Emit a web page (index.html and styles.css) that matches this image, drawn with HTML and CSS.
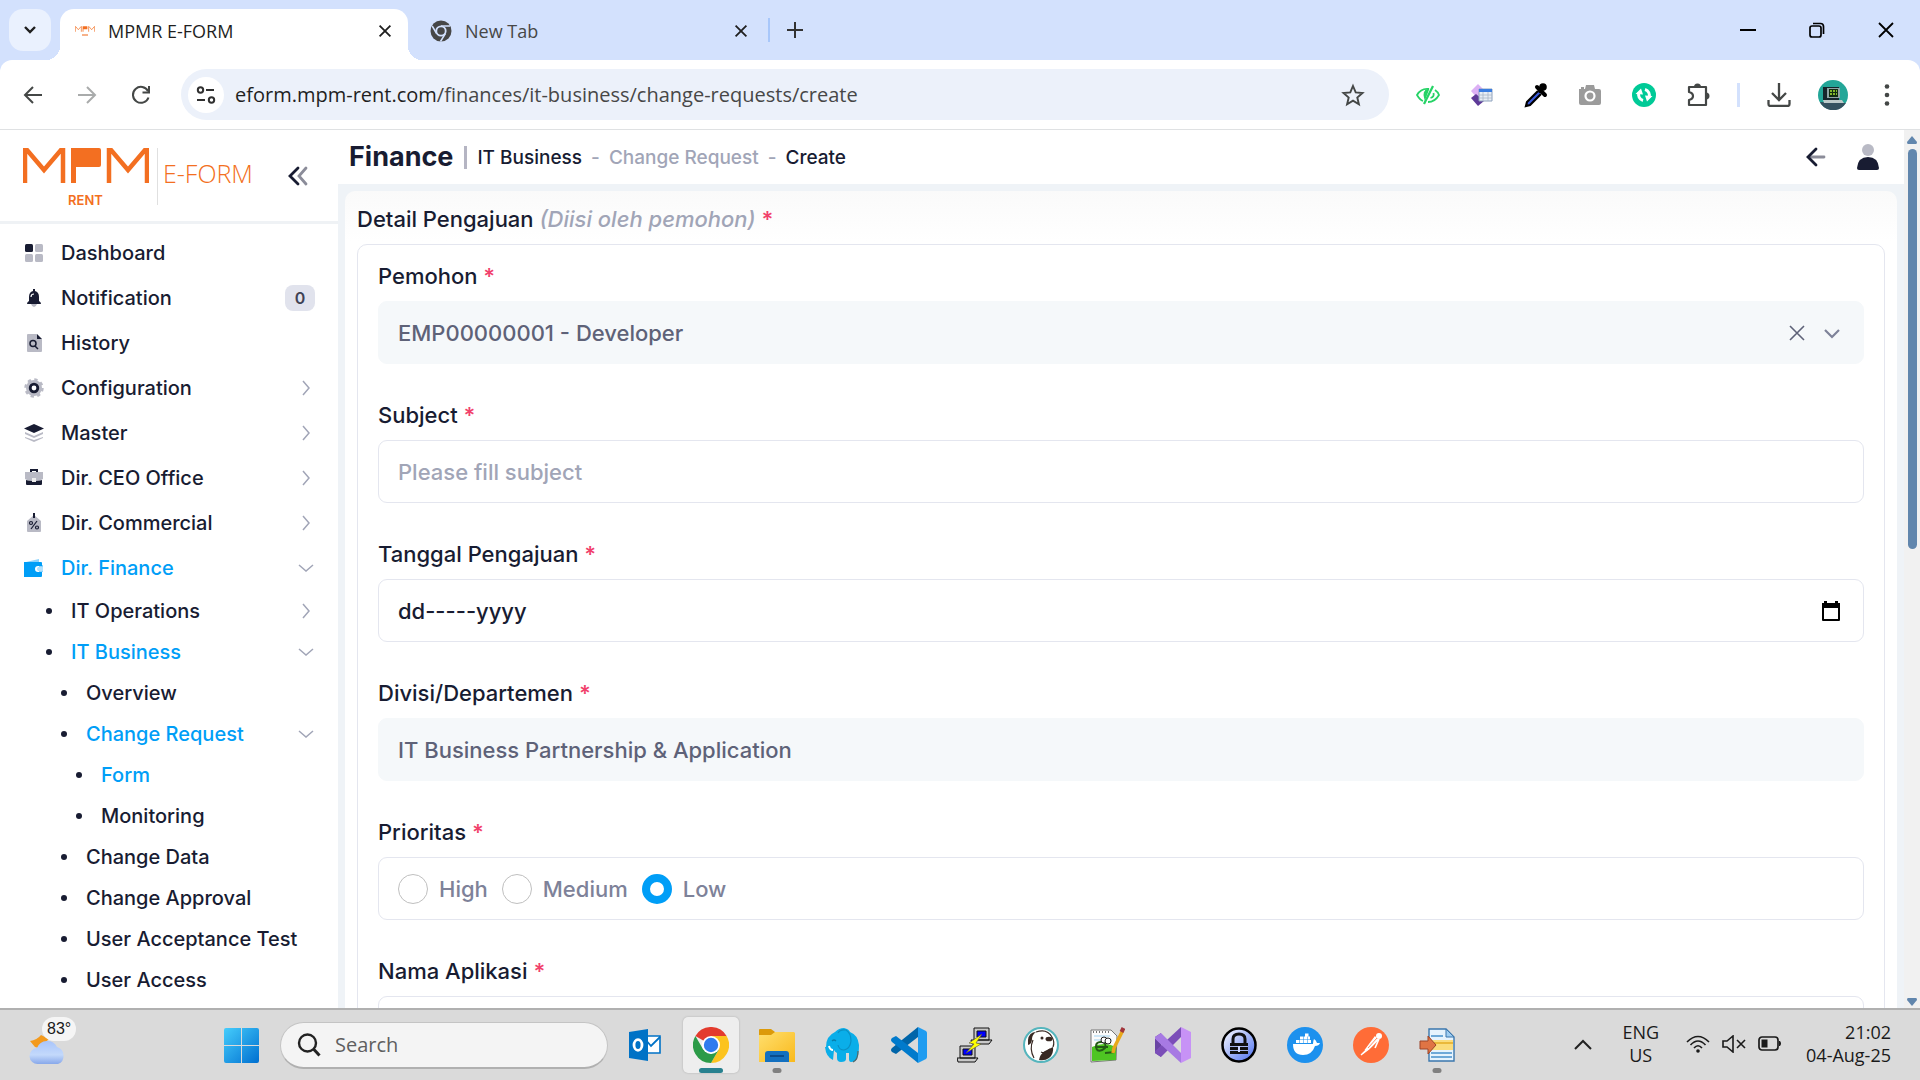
FILE: index.html
```html
<!DOCTYPE html>
<html lang="id">
<head>
<meta charset="utf-8">
<meta name="viewport" content="width=device-width, initial-scale=1">
<title>MPMR E-FORM</title>
<link rel="stylesheet" href="styles.css">
</head>
<body>
<svg class="defs" aria-hidden="true">
  <symbol id="chev-right" viewBox="0 0 18 18"><path d="M6 2l6 7-6 7" fill="none" stroke="currentColor" stroke-width="1.5"/></symbol>
  <symbol id="chev-down" viewBox="0 0 18 18"><path d="M2 6l7 6 7-6" fill="none" stroke="currentColor" stroke-width="1.5"/></symbol>
  <symbol id="close" viewBox="0 0 20 20"><path d="M4 4l12 12M16 4L4 16" fill="none" stroke="currentColor" stroke-width="2"/></symbol>
  <symbol id="mpm" viewBox="0 0 126 35">
    <path d="M2 35V2h2l17 20L38 2h2v33M86 35V2h2l17 20L122 2h2v33" fill="none" stroke="#f36f21" stroke-width="4.5"/>
    <path d="M48 0h28q2 0 2 2v15q0 2-2 2H53v16h-5z" fill="#f36f21"/>
  </symbol>
</svg>

<header class="browser">
  <div class="tabstrip">
    <button class="tab-search" aria-label="Search tabs"><svg width="16" height="16" viewBox="0 0 16 16"><path d="M3 5l5 5 5-5" fill="none" stroke="#1f1f1f" stroke-width="2.4"/></svg></button>
    <div class="tab tab-active">
      <span class="favicon"><svg width="20" height="6" aria-hidden="true"><use href="#mpm"/></svg><svg width="6" height="2" viewBox="0 0 6 2"><path d="M0 1h6" stroke="#f7b28a" stroke-width="2"/></svg></span>
      <span class="tab-title">MPMR E-FORM</span>
      <button class="tab-close" aria-label="Close tab"><svg width="18" height="18"><use href="#close"/></svg></button>
    </div>
    <div class="tab">
      <svg width="22" height="22" viewBox="0 0 22 22"><circle cx="11" cy="11" r="10.5" fill="#474747"/><circle cx="11" cy="11" r="5.6" fill="#d3e1fd"/><circle cx="11" cy="11" r="3.8" fill="#474747"/><path d="M11 6h9M6.600 13.500L2.200 6M15.400 13.500L10.500 21.500" stroke="#d3e1fd" stroke-width="1.5"/></svg>
      <span class="tab-title">New Tab</span>
      <button class="tab-close" aria-label="Close tab"><svg width="18" height="18"><use href="#close"/></svg></button>
    </div>
    <span class="tab-sep"></span>
    <button class="new-tab" aria-label="New tab"><svg width="18" height="18" viewBox="0 0 18 18"><path d="M9 1v16M1 9h16" stroke="#333" stroke-width="2"/></svg></button>
    <div class="window-controls">
      <button aria-label="Minimize"><svg width="16" height="18" viewBox="0 0 16 18"><path d="M0 9h16" stroke="#000" stroke-width="2"/></svg></button>
      <button aria-label="Restore"><svg width="16" height="16" viewBox="0 0 16 16" fill="none" stroke="#000" stroke-width="1.7"><rect x="1" y="4" width="11" height="11" rx="2"/><path d="M4 1.500h7.500q3 0 3 3V12"/></svg></button>
      <button aria-label="Close window"><svg width="16" height="16" viewBox="0 0 16 16"><path d="M1 1l14 14M15 1L1 15" stroke="#000" stroke-width="1.8"/></svg></button>
    </div>
  </div>
  <div class="toolbar">
    <button class="nav-btn" aria-label="Back"><svg width="20" height="20" viewBox="0 0 20 20" fill="none" stroke="#444746" stroke-width="2"><path d="M19 10H2.500M10 2l-8 8 8 8"/></svg></button>
    <button class="nav-btn" aria-label="Forward"><svg width="20" height="20" viewBox="0 0 20 20" fill="none" stroke="#a9abab" stroke-width="2"><path d="M1 10h16.500M10 2l8 8-8 8"/></svg></button>
    <button class="nav-btn" aria-label="Reload"><svg width="20" height="20" viewBox="0 0 20 20" fill="none" stroke="#444746" stroke-width="2"><path d="M17.500 12.500A8 8 0 1 1 17 6M18 1v6.500h-6.500"/></svg></button>
    <div class="omnibox">
      <button class="site-info" aria-label="Site information"><svg width="20" height="20" viewBox="0 0 20 20" fill="none" stroke="#303030" stroke-width="2"><circle cx="4.500" cy="5" r="2.700"/><path d="M10 5h8M1 15h8"/><circle cx="15.500" cy="15" r="2.700"/></svg></button>
      <div class="url" role="textbox" aria-label="Address"><span class="url-host">eform.mpm-rent.com</span>/finances/it-business/change-requests/create</div>
      <button class="star" aria-label="Bookmark"><svg width="24" height="24" viewBox="0 0 24 24" fill="none" stroke="#444746" stroke-width="1.900"><path d="M12 3l2.700 6.400 6.800.600-5.200 4.500 1.600 6.800L12 17.700l-5.900 3.600 1.600-6.800L2.500 10l6.800-.600z"/></svg></button>
    </div>
    <div class="extensions">
      <button aria-label="Privacy viewer"><svg width="24" height="20" viewBox="0 0 24 20" fill="none" stroke="#25d366" stroke-width="1.800"><path d="M13 4Q5 3 1 10q3 5 6 6M19 5q3 2 4 5-4 7-11 7"/><path d="M17 1L8 19" stroke-width="2.200"/><path d="M12 5q-5 1-3 8z" fill="#25d366"/><path d="M17.500 8q1 4-3 5"/></svg></button>
      <button aria-label="Table tool"><svg width="24" height="24" viewBox="0 0 24 24"><path d="M8 1l7 7-7 8-7-8z" fill="#dcb0f5"/><path d="M1 15l5-4 8 7-6 5z" fill="#5e3a98"/><path d="M9 6h13v12H9z" fill="#e9eef5" stroke="#8da2bd"/><path d="M9 6h13v3H9z" fill="#3b7de0"/><path d="M9 12h13M9 15h13M13 9v9M18 9v9" stroke="#a9b6c7" stroke-width=".8"/></svg></button>
      <button aria-label="Color picker"><svg width="24" height="26" viewBox="0 0 24 26"><path d="M14 9L3 20l-1 4 4-1L17 12" fill="#3b5bdb" stroke="#000" stroke-width="2.200"/><path d="M13 5l8 8M16 9l4-4" stroke="#000" stroke-width="4" stroke-linecap="round"/><circle cx="19" cy="5" r="3.800"/></svg></button>
      <button aria-label="Capture"><svg width="22" height="20" viewBox="0 0 22 20"><path d="M0 4h2V2h3v2h1l1-4h8l1 4h4q2 0 2 2v12q0 2-2 2H2q-2 0-2-2z" fill="#9b9b9b"/><circle cx="11" cy="11" r="4.500" fill="none" stroke="#fff" stroke-width="2.200"/></svg></button>
      <button aria-label="Sync"><svg width="24" height="24" viewBox="0 0 24 24"><circle cx="12" cy="12" r="12" fill="#00ca97"/><path d="M11 17.500A6 6 0 0 1 7 9.500M13 6.500a6 6 0 0 1 4 8" fill="none" stroke="#fff" stroke-width="3"/><path d="M3.500 11L9 5.500l2 6zM20.500 13L15 18.500l-2-6z" fill="#fff"/></svg></button>
      <button aria-label="Extensions"><svg width="26" height="26" viewBox="0 0 26 26"><path d="M4 5h17v18H4v-5q4-1 4-4t-4-4z" fill="none" stroke="#444746" stroke-width="2.200" stroke-linejoin="round"/><path d="M9 5a3.500 3.500 0 0 1 7 0zM21 10.500a3.500 3.500 0 0 1 0 7z" fill="#444746"/></svg></button>
      <span class="tool-sep"></span>
      <button aria-label="Downloads"><svg width="24" height="24" viewBox="0 0 24 24" fill="none" stroke="#444746" stroke-width="2.300"><path d="M12 0v16M5 10l7 7 7-7M1.500 17v4q0 2 2 2h17q2 0 2-2v-4"/></svg></button>
      <button aria-label="Profile"><svg width="30" height="30" viewBox="0 0 30 30"><circle cx="15" cy="15" r="15" fill="#23a698"/><path d="M2 22l26 1a15 15 0 0 1-25 1z" fill="#34515f"/><path d="M5 7h16v13H5z" fill="#16252b"/><path d="M9 8h13v10H9z" fill="#8fa4a5"/><path d="M11 9h9v8h-9z" fill="#102b10"/><path d="M12 11h7M12 14h7" stroke="#83b72c" stroke-width="2" stroke-dasharray="2 1"/><path d="M5 20h19l2 3H6z" fill="#bdcaca"/></svg></button>
      <button aria-label="Menu"><svg width="6" height="22" viewBox="0 0 6 22" fill="#444746"><circle cx="3" cy="2.500" r="2.300"/><circle cx="3" cy="11" r="2.300"/><circle cx="3" cy="19.500" r="2.300"/></svg></button>
    </div>
  </div>
</header>

<div class="app">
  <aside class="sidebar">
    <div class="brand">
      <div class="brand-mark"><svg width="126" height="35" role="img" aria-label="MPM"><use href="#mpm"/></svg><span class="brand-sub">RENT</span></div>
      <span class="brand-name">E-FORM</span>
      <button class="collapse" aria-label="Collapse menu"><svg width="20" height="20" viewBox="0 0 20 20" fill="none" stroke-width="2.800" stroke-linecap="round"><path d="M18 2l-7 8 7 8" stroke="#8b8c99"/><path d="M10 2l-8 8 8 8" stroke="#181c32"/></svg></button>
    </div>
    <nav class="menu">
      <a class="item" href="#"><svg width="20" height="20" viewBox="0 0 20 20"><rect x="1" y="1" width="8" height="8" rx="1.500" fill="#181c32"/><g fill="#b9bac5"><rect x="11" y="1" width="8" height="8" rx="1.500"/><rect x="1" y="11" width="8" height="8" rx="1.500"/><rect x="11" y="11" width="8" height="8" rx="1.500"/></g></svg><span>Dashboard</span></a>
      <a class="item" href="#"><svg width="20" height="20" viewBox="0 0 20 20"><path d="M7 16h6q-1 3-3 3t-3-3z" fill="#b9bac5"/><path d="M9 1h2v2q4 1 4 6v4q2 1 2 3H3q0-2 2-3V9q0-5 4-6z" fill="#181c32"/><path d="M7 9q0-3 3-3" fill="none" stroke="#fff" stroke-width="1.200"/></svg><span>Notification</span><span class="badge">0</span></a>
      <a class="item" href="#"><svg width="20" height="20" viewBox="0 0 20 20"><path d="M4 1h9v5h5v12q0 1-1 1H4q-1 0-1-1V2q0-1 1-1z" fill="#b9bac5"/><path d="M13 1l5 5h-5z" fill="#181c32"/><circle cx="9" cy="10.500" r="3" fill="none" stroke="#181c32" stroke-width="1.500"/><path d="M11 13l3 3" stroke="#181c32" stroke-width="1.500"/></svg><span>History</span></a>
      <a class="item" href="#"><svg width="20" height="20" viewBox="0 0 20 20"><circle cx="10" cy="10" r="8" fill="#b9bac5"/><circle cx="10" cy="10" r="8.500" fill="none" stroke="#b9bac5" stroke-width="2.400" stroke-dasharray="3.300 3.380"/><circle cx="10" cy="10" r="3.800" fill="#fff" stroke="#181c32" stroke-width="2.800"/></svg><span>Configuration</span><svg class="chev" width="18" height="18"><use href="#chev-right"/></svg></a>
      <a class="item" href="#"><svg width="20" height="20" viewBox="0 0 20 20"><path d="M1 9l9 4 9-4v2l-9 4-9-4zM1 14l9 3 9-3v1l-9 4-9-4z" fill="#b9bac5"/><path d="M10 1l10 4.500L10 10 0 5.500z" fill="#181c32"/></svg><span>Master</span><svg class="chev" width="18" height="18"><use href="#chev-right"/></svg></a>
      <a class="item" href="#"><svg width="20" height="20" viewBox="0 0 20 20"><path d="M7 5V2h6v3" fill="none" stroke="#181c32" stroke-width="2"/><path d="M1 4h18v7l-4 2H5l-4-2z" fill="#b9bac5"/><path d="M2 12q3 1 6 1v-1h4v1q3 0 6-1v4q0 1-1 1H3q-1 0-1-1z" fill="#181c32"/><path d="M8 10h4v4H8z" fill="#eee"/></svg><span>Dir. CEO Office</span><svg class="chev" width="18" height="18"><use href="#chev-right"/></svg></a>
      <a class="item" href="#"><svg width="20" height="20" viewBox="0 0 20 20"><path d="M10 2l7 6v10q0 1-1 1H4q-1 0-1-1V8z" fill="#b9bac5"/><path d="M10 0v5" stroke="#181c32" stroke-width="2"/><path d="M7 16l6-8" stroke="#181c32" stroke-width="1.200"/><g fill="none" stroke="#181c32" stroke-width="1.200"><circle cx="7" cy="10" r="1.500"/><circle cx="13" cy="14.500" r="1.500"/></g></svg><span>Dir. Commercial</span><svg class="chev" width="18" height="18"><use href="#chev-right"/></svg></a>
      <a class="item active" href="#"><svg width="20" height="20" viewBox="0 0 20 20"><path d="M2 4l13-3v3zM15 7h4v7h-4z" fill="#8dd3fc"/><path d="M0 4h17q1 0 1 1v3h-4q-3 0-3 3t3 3h4v4q0 1-1 1H0z" fill="#009ef7"/><path d="M14 9h5v4h-5q-2-2 0-4z" fill="#b2e1fd"/></svg><span>Dir. Finance</span><svg class="chev" width="18" height="18"><use href="#chev-down"/></svg></a>
      <a class="sub l1" href="#"><span>IT Operations</span><svg class="chev" width="18" height="18"><use href="#chev-right"/></svg></a>
      <a class="sub l1 active" href="#"><span>IT Business</span><svg class="chev" width="18" height="18"><use href="#chev-down"/></svg></a>
      <a class="sub l2" href="#"><span>Overview</span></a>
      <a class="sub l2 active" href="#"><span>Change Request</span><svg class="chev" width="18" height="18"><use href="#chev-down"/></svg></a>
      <a class="sub l3 active" href="#"><span>Form</span></a>
      <a class="sub l3" href="#"><span>Monitoring</span></a>
      <a class="sub l2" href="#"><span>Change Data</span></a>
      <a class="sub l2" href="#"><span>Change Approval</span></a>
      <a class="sub l2" href="#"><span>User Acceptance Test</span></a>
      <a class="sub l2" href="#"><span>User Access</span></a>
    </nav>
  </aside>

  <main class="page">
    <div class="page-header">
      <h1>Finance</h1>
      <span class="bar"></span>
      <nav class="crumbs"><a href="#">IT Business</a><i>-</i><a class="muted" href="#">Change Request</a><i>-</i><span>Create</span></nav>
      <div class="page-actions">
        <button aria-label="Go back"><svg width="20" height="20" viewBox="0 0 20 20" fill="none" stroke-width="2.800" stroke-linecap="round"><path d="M5 10h13" stroke="#8b8c99"/><path d="M10 2l-8 8 8 8" stroke="#181c32"/></svg></button>
        <button aria-label="Account"><svg width="22" height="26" viewBox="0 0 22 26"><circle cx="11" cy="6" r="6" fill="#b9bac5"/><path d="M0 24q1-11 11-11t11 11q0 2-2 2H2q-2 0-2-2z" fill="#181c32"/></svg></button>
      </div>
    </div>
    <form class="card">
      <h2>Detail Pengajuan <em>(Diisi oleh pemohon)</em> <b>*</b></h2>
      <div class="fields">
        <div class="field"><label for="pemohon">Pemohon <b>*</b></label>
          <div class="control filled">
            <select id="pemohon"><option>EMP00000001 - Developer</option></select>
            <button type="button" aria-label="Clear"><svg width="20" height="20" viewBox="0 0 20 20"><path d="M3 3l14 14M17 3L3 17" stroke="#5e6278" stroke-width="1.600"/></svg></button>
            <button type="button" aria-label="Open list"><svg width="18" height="18" viewBox="0 0 18 18"><path d="M2 6l7 7 7-7" fill="none" stroke="#7e8299" stroke-width="2.200"/></svg></button>
          </div></div>
        <div class="field"><label for="subject">Subject <b>*</b></label>
          <div class="control"><input id="subject" type="text" placeholder="Please fill subject"></div></div>
        <div class="field"><label for="tanggal">Tanggal Pengajuan <b>*</b></label>
          <div class="control"><input id="tanggal" type="text" value="dd-----yyyy">
            <button type="button" aria-label="Open calendar"><svg width="20" height="20" viewBox="0 0 20 20"><path d="M1 2h2V0h3v2h8V0h3v2h2v17q0 1-1 1H2q-1 0-1-1zM3 7v11h14V7z" fill-rule="evenodd"/></svg></button></div></div>
        <div class="field"><label for="divisi">Divisi/Departemen <b>*</b></label>
          <div class="control filled"><input id="divisi" type="text" readonly value="IT Business Partnership &amp; Application"></div></div>
        <div class="field"><span class="label" id="prioritas">Prioritas <b>*</b></span>
          <div class="control radios" role="radiogroup" aria-labelledby="prioritas">
            <label><input type="radio" name="prio">High</label>
            <label><input type="radio" name="prio">Medium</label>
            <label><input type="radio" name="prio" checked>Low</label>
          </div></div>
        <div class="field"><label for="aplikasi">Nama Aplikasi <b>*</b></label>
          <div class="control"><input id="aplikasi" type="text"></div></div>
      </div>
    </form>
  </main>
  <div class="scrollbar" aria-hidden="true">
    <svg width="10" height="8" viewBox="0 0 10 8"><path d="M5 0l5 6q0 2-1 2H1q-1 0-1-2z" fill="#6186ad"/></svg>
    <span class="thumb"></span>
    <svg class="down" width="10" height="8" viewBox="0 0 10 8"><path d="M5 8L0 2q0-2 1-2h8q1 0 1 2z" fill="#6186ad"/></svg>
  </div>
</div>

<footer class="taskbar">
  <button class="weather" aria-label="Weather"><svg width="38" height="44" viewBox="0 0 38 44"><defs><linearGradient id="cl" x2="0" y2="1"><stop stop-color="#a9c5fb"/><stop offset=".6" stop-color="#c3d9fb"/><stop offset="1" stop-color="#88a8ea"/></linearGradient></defs><path d="M1 18q7-1 11-6l8 4-10 9-4-1z" fill="#f39a1d"/><path d="M9 41a8 8 0 0 1-1-16 11 11 0 0 1 20-1 9 9 0 0 1 1 17z" fill="url(#cl)"/></svg><span class="temp">83°</span></button>
  <button class="start" aria-label="Start"><svg width="35" height="35" viewBox="0 0 35 35"><defs><linearGradient id="wn" x2="1" y2="1"><stop stop-color="#45cdfc"/><stop offset="1" stop-color="#006fd0"/></linearGradient></defs><path d="M2 0h15v17H0V2q0-2 2-2zM18 0h15q2 0 2 2v15H18zM0 18h17v17H2q-2 0-2-2zM18 18h17v15q0 2-2 2H18z" fill="url(#wn)"/></svg></button>
  <label class="search"><svg width="24" height="24" viewBox="0 0 24 24" fill="none" stroke="#222" stroke-width="2.400"><circle cx="10.500" cy="10" r="8.500"/><path d="M16.500 16l6 6.500" stroke-width="3"/></svg><input type="text" placeholder="Search" aria-label="Search"></label>
  <div class="apps">
    <button aria-label="Outlook"><svg width="36" height="36" viewBox="0 0 36 36"><path d="M18 9h15v17H18z" fill="#fff" stroke="#0072c6" stroke-width="1.600"/><path d="M18 12l6 7 9-9" fill="none" stroke="#0072c6" stroke-width="1.800"/><path d="M2 5l19-3v32L2 31z" fill="#0072c6"/><ellipse cx="11" cy="18" rx="4" ry="5.300" fill="none" stroke="#fff" stroke-width="2.800"/></svg></button>
    <button class="current" aria-label="Chrome"><svg width="36" height="36" viewBox="0 0 36 36"><path d="M18 18L2.400 9A18 18 0 0 1 33.600 9z" fill="#e33b2e"/><path d="M18 18V9h15.600A18 18 0 0 1 18 36l7.800-13.500z" fill="#fcc31e"/><path d="M2.400 9A18 18 0 0 0 18 36l7.800-13.500L18 27l-7.800-4.500z" fill="#2c9b48"/><circle cx="18" cy="18" r="9" fill="#fff"/><circle cx="18" cy="18" r="7.200" fill="#2f7bee"/></svg></button>
    <button class="open" aria-label="File Explorer"><svg width="36" height="36" viewBox="0 0 36 36"><defs><linearGradient id="fo" x2="1" y2="1"><stop stop-color="#ffdf6e"/><stop offset="1" stop-color="#f9b91c"/></linearGradient></defs><path d="M0 3q0-1 1-1h11l4 3v9H0z" fill="#dc9a0a"/><path d="M0 8h12l4-3h19l1 1v29H0z" fill="url(#fo)"/><path d="M6 35V27q0-3 3-3h18q3 0 3 3v8z" fill="#1370c0"/><path d="M11 29h14" stroke="#0a4c8c" stroke-width="2"/></svg></button>
    <button aria-label="Elephant SQL"><svg width="36" height="36" viewBox="0 0 36 36"><path d="M1 20Q1 9 10 5q4-4 9-4 5 1 6 4 8 3 9 13 0 9-2 14-2 3-6 3-2 0-2-3v-6h-3v6q0 3-5 3-4 0-4-4v-5q-2-1-3-3l-1 10q-7-3-8-13z" fill="#0aaee9"/><path d="M13 6q2-4 8-3 5 3 5 11-1 8-7 9-5 0-6-5" fill="none" stroke="#0a90c4" stroke-width="1.200"/><path d="M7 14q2-2 4 0" fill="none" stroke="#087fab" stroke-width="1.200"/><path d="M4 19q1 4 4 4" fill="none" stroke="#fff" stroke-width="2"/><path d="M33 24q0 9-5 11" fill="none" stroke="#566" stroke-width="1.200"/></svg></button>
    <button aria-label="Visual Studio Code"><svg width="36" height="36" viewBox="0 0 36 36"><path d="M27 0v10L5 27l-4-2q-2-2 0-4z" fill="#0065a9"/><path d="M27 36V26L5 9l-4 2q-2 2 0 4z" fill="#007acc"/><path d="M27 0l8 4q1 1 1 2v24q0 1-1 2l-8 4z" fill="#1f9cf0"/></svg></button>
    <button aria-label="PuTTY"><svg width="36" height="36" viewBox="0 0 36 36"><g stroke="#111"><path d="M17 1h15v12H17zM14 13h21l-3 4H15z" fill="#c9c9c9"/><path d="M20 4h9v6h-9z" fill="#00f"/><path d="M3 19h15v12H3zM0 31h21l-3 4H1z" fill="#c9c9c9"/><path d="M6 22h9v6H6z" fill="#00f"/><path d="M25 7L12 16l5 1-8 9 15-9-5-1z" fill="#ff0" stroke="#554" stroke-width=".6"/></g></svg></button>
    <button aria-label="DBeaver"><svg width="36" height="36" viewBox="0 0 36 36"><circle cx="18" cy="18" r="17" fill="#fff" stroke="#55b5bd" stroke-width="2"/><path d="M5 13q1-8 8-8-4 3-4 7 0 5-4 6zM22 24l8-4q1 7-4 11-4 3-10 2 1-6 6-9z" fill="#382923"/><path d="M13 5q11-4 16 5 3 5 1 10M10 13q-4 9 1 18M18 25q4 2 9-3" fill="none" stroke="#382923" stroke-width="1.200"/><circle cx="19" cy="11" r="1.500" fill="#382923"/><ellipse cx="26" cy="12" rx="3.500" ry="2.300" fill="#382923"/></svg></button>
    <button aria-label="Notepad++"><svg width="36" height="36" viewBox="0 0 36 36"><path d="M2 3h20l6 6-1 24-25 2z" fill="#fbfbfb" stroke="#777"/><path d="M3 20q12-6 24 0v13L3 34z" fill="#4ec522"/><path d="M4 5h18" stroke="#777" stroke-width="2" stroke-dasharray="1 2"/><path d="M5 9h16M5 13h18" stroke="#bfe0f5" stroke-width="1.500"/><path d="M8 23q-3-8 4-8 6 0 4 6-4 4-8 2M6 20h13M16 26l10-1" fill="none" stroke="#245c16" stroke-width="2"/><circle cx="15" cy="13" r="3" fill="#fff" stroke="#222"/><circle cx="19" cy="14" r="3" fill="#fff" stroke="#222"/><path d="M34 3L25 21l-1 5" fill="none" stroke="#e8a81b" stroke-width="3.500"/><path d="M34.500 1l-2 4" stroke="#a1353b" stroke-width="4"/></svg></button>
    <button aria-label="Visual Studio"><svg width="36" height="36" viewBox="0 0 36 36"><path d="M0 10l6-4v24l-6-4z" fill="#6a44a4"/><path d="M6 30L26 10V0L0 24v2z" fill="#7b4eb8"/><path d="M6 6l20 20v10L0 12v-2z" fill="#a77ae3"/><path d="M0 12v12l6-6z" fill="#6a44a4"/><path d="M26 0l10 5v26l-10 5z" fill="#c792f6"/></svg></button>
    <button aria-label="KeePass"><svg width="36" height="36" viewBox="0 0 36 36"><defs><linearGradient id="kp" x2="1" y2="1"><stop stop-color="#fff"/><stop offset="1" stop-color="#4a6ef0"/></linearGradient></defs><circle cx="18" cy="18" r="16.500" fill="url(#kp)" stroke="#000" stroke-width="2.500"/><path d="M12 16v-4q0-5 6-5t6 5v4" fill="none" stroke="#111" stroke-width="3"/><path d="M9 16h18v11H9z" fill="#111"/><path d="M9 19.500h18M9 23.500h18" stroke="#a8b8f0"/><path d="M18 19v6" stroke="#ccd6ff" stroke-width="2"/></svg></button>
    <button aria-label="Docker"><svg width="36" height="36" viewBox="0 0 36 36"><circle cx="18" cy="18" r="18" fill="#1d91ee"/><path d="M6 17h20q0-3 1-5 2 1 3 4h3q-1 3-5 3-3 9-12 9Q6 28 6 17z" fill="#fff"/><path d="M9 14.500h15M13 11h10M18 8h4" stroke="#fff" stroke-width="3" stroke-dasharray="3.500 .5"/></svg></button>
    <button aria-label="Postman"><svg width="36" height="36" viewBox="0 0 36 36"><circle cx="18" cy="18" r="18" fill="#ff6c37"/><circle cx="26" cy="9" r="3" fill="#fff"/><path d="M22 10l3 3-8 8-4 1zM15 21l1 1-8 6z" fill="#fff" stroke="#fff" stroke-width="1.200"/><path d="M26 12l-4 9" stroke="#fff" stroke-width="1.600"/><path d="M24 11l-9 10" stroke="#ff6c37" stroke-width=".8"/></svg></button>
    <button class="open" aria-label="File transfer"><svg width="36" height="36" viewBox="0 0 36 36"><path d="M10 2h17l8 8v24H10z" fill="#e6f3fd" stroke="#3b77ad" stroke-width="1.400"/><path d="M27 2v8h8z" fill="#9ecdf2" stroke="#3b77ad"/><path d="M12 26h21M12 30h21M12 9h12" stroke="#6ea9d8" stroke-width="2"/><path d="M11 13h23v10H11z" fill="#fbdc7b"/><path d="M15 16h19" stroke="#eab83a" stroke-width="2"/><path d="M1 14h8V9l8 9-8 9v-5H1z" fill="#e07444" stroke="#9c4429"/></svg></button>
  </div>
  <div class="tray">
    <button aria-label="Hidden icons"><svg width="18" height="12" viewBox="0 0 18 12"><path d="M1 11l8-8 8 8" fill="none" stroke="#222" stroke-width="2"/></svg></button>
    <div class="lang">ENG<br>US</div>
    <button class="status" aria-label="Network, sound and battery">
      <svg width="24" height="18" viewBox="0 0 24 18" fill="none" stroke="#1a1a1a" stroke-width="1.600"><path d="M1 7q11-11 22 0M4.500 10q7.500-8 15 0M8 13q4-4.500 8 0"/><circle cx="12" cy="16" r="1.800" fill="#1a1a1a" stroke="none"/></svg>
      <svg width="24" height="18" viewBox="0 0 24 18" fill="none" stroke="#1a1a1a" stroke-width="1.600"><path d="M1 6h4l6-5v16l-6-5H1zM15 5l8 8M23 5l-8 8"/></svg>
      <svg width="24" height="16" viewBox="0 0 24 16"><rect x="1" y="1" width="19" height="13" rx="3" fill="none" stroke="#1a1a1a" stroke-width="1.700"/><path d="M3.500 3.500h6v8h-6zM21 5h1q2 2.500 0 5h-1z" fill="#1a1a1a"/></svg>
    </button>
    <div class="clock">21:02<br>04-Aug-25</div>
  </div>
</footer>
</body>
</html>
```
FILE: styles.css
```css
* { box-sizing: border-box; }

body {
  margin: 0;
  height: 100vh;
  display: flex;
  flex-direction: column;
  overflow: hidden;
  background: #fff;
  color: #181c32;
  font-family: Inter, sans-serif;
  font-size: 20px;
  font-weight: 500;
}

button {
  display: flex;
  align-items: center;
  justify-content: center;
  flex: none;
  padding: 0;
  border: 0;
  background: none;
  color: inherit;
}

svg { flex: none; display: block; }
a { color: inherit; text-decoration: none; }
.defs { position: absolute; width: 0; height: 0; }

/* browser window */
.browser, .taskbar { font-family: "Open Sans", sans-serif; font-weight: 400; }
.browser { flex: none; background: #d3e1fd; border-bottom: 1px solid #dfe1e3; }
.tabstrip { display: flex; align-items: center; height: 60px; padding-left: 9px; }
.tab-search { width: 42px; height: 42px; border-radius: 14px; background: #eaf1fe; margin-right: 9px; }
.tab { display: flex; align-items: center; gap: 13px; width: 348px; padding: 2px 6px 0 22px; color: #474747; }
.tab-active { position: relative; align-self: flex-end; height: 51px; padding: 0 14px 8px; border-radius: 14px 14px 0 0; background: #fff; color: #1f1f1f; }
.tab-active::before, .tab-active::after { content: ""; position: absolute; bottom: 0; width: 14px; height: 14px; }
.tab-active::before { left: -14px; background: radial-gradient(circle at 0 0, transparent 14px, #fff 14px); }
.tab-active::after { right: -14px; background: radial-gradient(circle at 100% 0, transparent 14px, #fff 14px); }
.favicon { display: grid; justify-items: center; gap: 2px; width: 21px; }
.tab-title { flex: 1; font-size: 18px; }
.tab-close { color: #1f1f1f; }
.tab-sep { width: 2px; height: 24px; margin: 0 16px 0 12px; background: #a8c7fa; }
.window-controls { display: flex; margin-left: auto; }
.window-controls button { width: 69px; height: 58px; }

.toolbar { display: flex; align-items: center; height: 69px; padding: 0 6px; border-radius: 12px 12px 0 0; background: #fff; }
.nav-btn { width: 54px; height: 54px; }
.omnibox { display: flex; flex: 1; align-items: center; height: 51px; margin-left: 13px; padding: 0 24px 0 7px; border-radius: 26px; background: #ecf1fa; }
.site-info { width: 36px; height: 36px; border-radius: 50%; background: #fff; }
.url { flex: 1; margin-left: 11px; font-size: 20px; color: #474747; white-space: nowrap; }
.url-host { color: #1f1f1f; }
.extensions { display: flex; align-items: center; margin-left: 12px; }
.extensions button { width: 54px; height: 40px; }
.tool-sep { width: 3px; height: 24px; margin: 0 12px; background: #d3e1fd; }

/* application */
.app { flex: 1; display: flex; min-height: 0; overflow: hidden; }
.sidebar { flex: none; width: 338px; background: #fff; }
.brand { display: flex; height: 94px; padding: 18px 20px 0 23px; border-bottom: 3px solid #eff2f5; color: #f36f21; }
.brand-mark { display: flex; flex-direction: column; align-items: center; width: 135px; height: 57px; padding-right: 9px; border-right: 1px solid #e0e0e0; }
.brand-sub { margin-top: 9px; font-size: 13px; line-height: 16px; font-weight: 600; }
.brand-name { margin: 7px 0 0 5px; font-family: "Open Sans", sans-serif; font-size: 25px; line-height: 36px; font-weight: 300; }
.collapse { width: 40px; height: 56px; margin-left: auto; }

.menu { display: flex; flex-direction: column; padding-top: 6px; font-size: 20px; }
.item, .sub { display: flex; align-items: center; padding-right: 23px; }
.item { height: 45px; padding-left: 24px; gap: 17px; }
.sub { height: 41px; }
.sub::before { content: ""; width: 6px; height: 6px; margin-right: 19px; border-radius: 50%; background: #181c32; }
.l1 { padding-left: 46px; }
.l2 { padding-left: 61px; }
.l3 { padding-left: 76px; }
.active { color: #009ef7; }
.chev { margin-left: auto; color: #a1a5b7; }
.badge { margin-left: auto; width: 30px; border-radius: 8px; background: #e1e3ed; color: #3f4254; font-size: 16px; line-height: 26px; font-weight: 600; text-align: center; }

.page { flex: 1; min-width: 0; display: flex; flex-direction: column; background: #eff3f7; }
.page-header { flex: none; display: flex; align-items: center; height: 54px; padding: 0 25px 0 11px; background: #fff; }
h1 { margin: 0; font-size: 27px; line-height: 36px; font-weight: 700; }
.bar { width: 3px; height: 23px; margin: 0 10px 0 11px; background: #b5b5c3; }
.crumbs { display: flex; gap: 9px; font-size: 19px; }
.crumbs i, .muted { color: #a1a5b7; font-style: normal; }
.page-actions { display: flex; gap: 31px; margin-left: auto; }

.card { flex: none; margin: 7px 7px 0; padding: 12px; border-radius: 10px; background: linear-gradient(#fafafa, #fff 50px); }
h2 { margin: 0; font-size: 22px; line-height: 32px; font-weight: 500; }
em { color: #a1a5b7; }
b { color: #f1416c; font-weight: 600; }
.fields { margin-top: 9px; padding: 16px 20px; border: 1px solid #e4e6ef; border-radius: 10px; background: #fff; }
.field { margin-bottom: 36px; }
.field > label, .label { display: block; margin-bottom: 10px; font-size: 22px; line-height: 30px; }
.control { display: flex; align-items: center; height: 63px; padding: 0 22px 0 19px; border: 1px solid #e4e6ef; border-radius: 9px; background: #fff; gap: 16px; }
.control input[type="text"], select { flex: 1; min-width: 0; height: 100%; padding: 0; border: 0; outline: 0; background: none; color: #181c32; font: inherit; font-size: 22px; appearance: none; }
.control ::placeholder { color: #a1a5b7; opacity: 1; }
.control.filled { border-color: #f5f8fa; background: #f5f8fa; }
.control.filled input[type="text"], .filled select { color: #5e6278; }
.radios { gap: 14px; }
.radios label { display: flex; align-items: center; gap: 11px; color: #7e8299; font-size: 22px; }
.radios input { appearance: none; width: 30px; height: 30px; margin: 0; border: 1px solid #bfbfbf; border-radius: 50%; background: #fff; }
.radios input:checked { border: 8px solid #009ef7; }

.scrollbar { flex: none; display: flex; flex-direction: column; align-items: center; width: 16px; padding: 6px 0 2px; background: #f1f1f1; }
.thumb { width: 9px; height: 46%; margin-top: 5px; border-radius: 5px; background: #6186ad; }
.down { margin-top: auto; }

/* taskbar */
.taskbar { flex: none; display: flex; align-items: center; height: 72px; padding: 0 29px; border-top: 2px solid #b0b0b0; background: #dadada; color: #1a1a1a; }
.weather { position: relative; }
.temp { position: absolute; top: -6px; left: 13px; padding: 0 5px; border-radius: 12px; background: #f5f5f5; font-size: 16px; line-height: 24px; color: #1a1a1a; }
.start { margin-left: 157px; }
.search { display: flex; align-items: center; gap: 14px; width: 328px; height: 47px; margin-left: 21px; padding: 0 16px; border: 1px solid #c4c4c4; border-bottom: 2px solid #b0b0b0; border-radius: 24px; background: #f4f4f4; }
.search input { width: 200px; padding: 0; border: 0; outline: 0; background: none; font: inherit; font-size: 20px; }
.search ::placeholder { color: #5f5f5f; opacity: 1; }
.apps { display: flex; gap: 10px; margin-left: 9px; }
.apps button { position: relative; width: 56px; height: 56px; border-radius: 5px; }
.current { background: #eeeeee; box-shadow: 0 0 2px #aaa; }
.current::after, .open::after { content: ""; position: absolute; bottom: 0; left: 50%; height: 5px; border-radius: 3px; translate: -50% 0; }
.current::after { width: 24px; background: #28818f; }
.open::after { width: 9px; background: #808080; }
.tray { display: flex; align-items: center; margin-left: auto; padding-bottom: 3px; font-size: 18px; line-height: 23px; }
.lang { margin: 0 27px 0 30px; text-align: center; }
.status { gap: 12px; }
.clock { margin-left: 24px; text-align: right; }
```
